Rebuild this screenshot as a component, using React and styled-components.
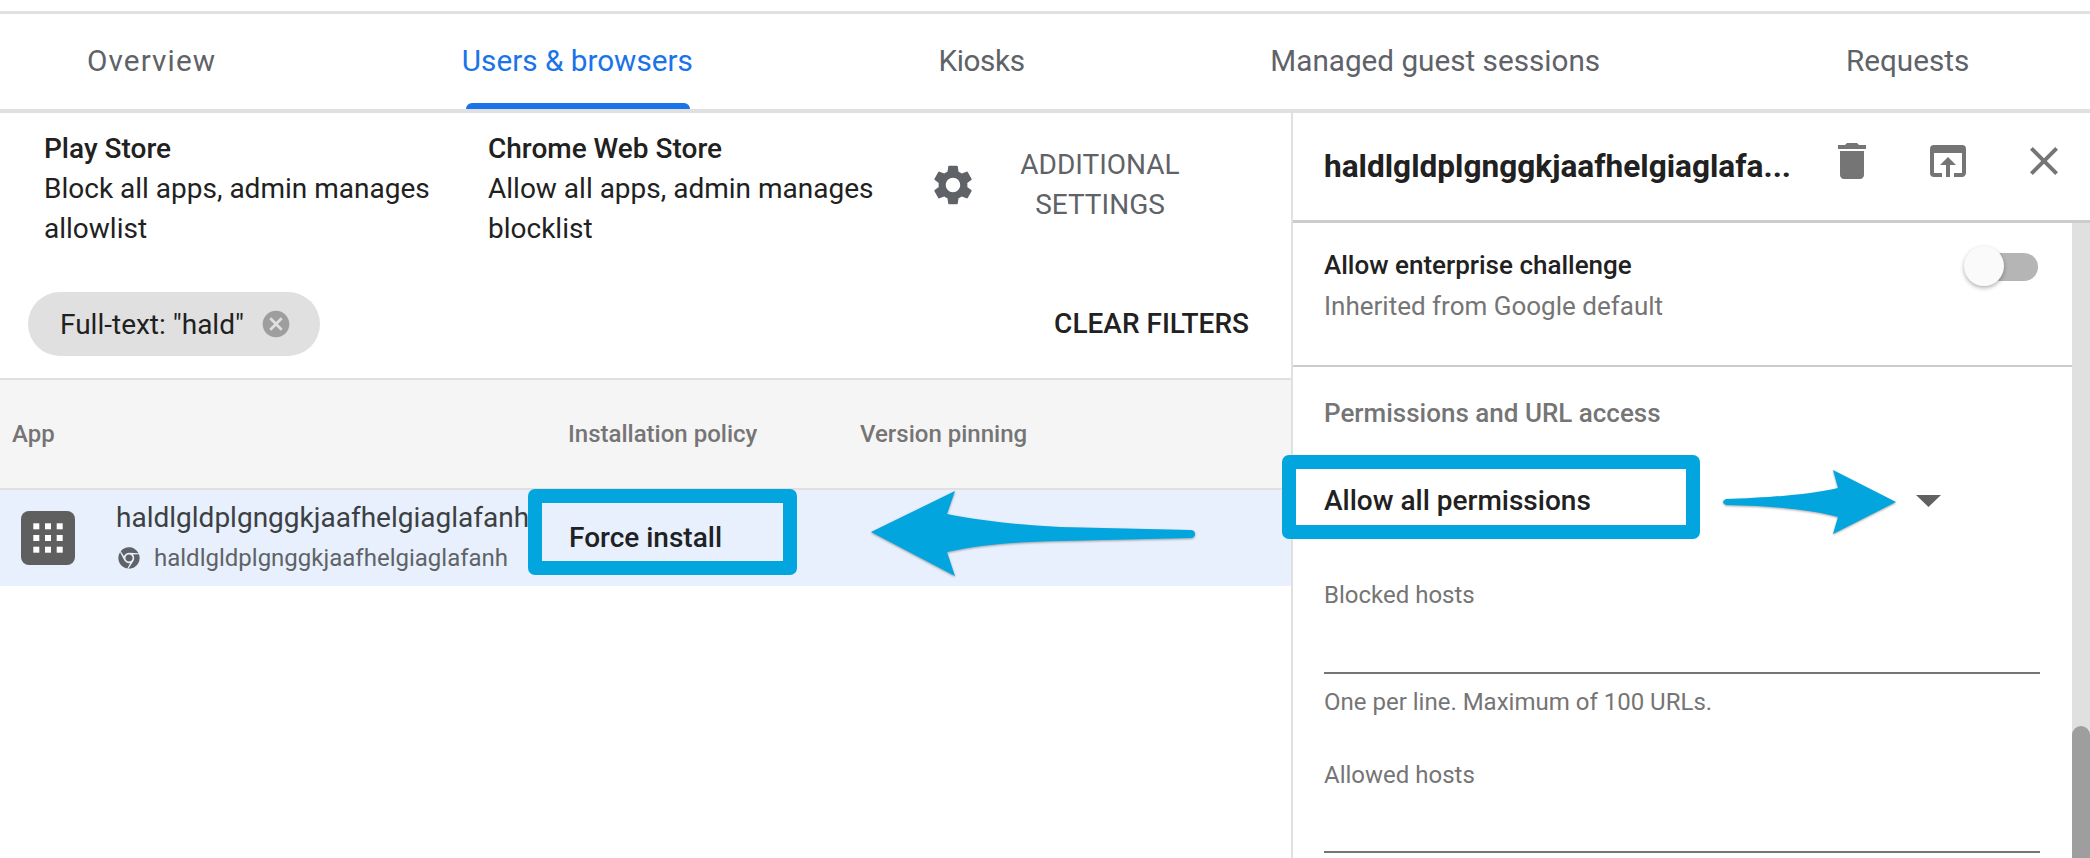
import styled, { createGlobalStyle } from 'styled-components';
import { MdSettings, MdCancel, MdDelete, MdOpenInBrowser, MdClose } from 'react-icons/md';
import { FaChrome } from 'react-icons/fa';

const GlobalStyle = createGlobalStyle`
  html, body { margin: 0; padding: 0; background: #fff; overflow: hidden; }
  body { font-family: Roboto, "Liberation Sans", sans-serif; }
  * { box-sizing: border-box; }
`;

const Page = styled.div`
  position: relative;
  width: 2090px;
  height: 858px;
  overflow: hidden;
  padding-top: 11px;
  display: flex;
  flex-direction: column;
`;

const Tabs = styled.nav`
  flex: none;
  display: flex;
  gap: 245.7px;
  height: 102px;
  padding-left: 87px;
  border-top: 3px solid #e0e0e0;
  border-bottom: 4px solid #e0e0e0;
`;

const Tab = styled.div`
  position: relative;
  font-size: 29.7px;
  line-height: 94px;
  letter-spacing: ${({ $spacing }) => $spacing || 0}px;
  white-space: nowrap;
  color: ${({ $active }) => ($active ? '#1a73e8' : '#5f6368')};

  ${({ $active }) => $active && `
    &::after {
      content: '';
      position: absolute;
      left: 4px;
      right: 3px;
      bottom: 0;
      height: 6px;
      background: #1a73e8;
      border-radius: 6px 6px 0 0;
    }
  `}
`;

const Main = styled.div`
  flex: 1;
  min-height: 0;
  display: flex;
`;

const LeftColumn = styled.section`
  flex: none;
  width: 1291px;
  display: flex;
  flex-direction: column;
`;

const StoreRow = styled.div`
  display: grid;
  grid-template-columns: 444px 441px auto;
  height: 135px;
  padding: 16px 0 0 44px;
`;

const Store = styled.div`
  padding-right: 40px;
  font-size: 28px;
  line-height: 40px;
  color: #212121;
`;

const StoreName = styled.div`
  font-weight: 500;
`;

const SettingsButton = styled.div`
  display: flex;
  align-items: center;
  gap: 33px;
  height: 80px;
  margin-top: 16px;
  color: #5f6368;
  font-size: 28px;
  line-height: 40px;
  text-align: center;
`;

const SettingsLabel = styled.div`
  width: 180px;
`;

const FilterRow = styled.div`
  display: flex;
  align-items: center;
  justify-content: space-between;
  padding: 44px 42px 22px 28px;
`;

const Chip = styled.div`
  display: flex;
  align-items: center;
  gap: 16px;
  height: 64px;
  padding: 0 28px 0 32px;
  border-radius: 32px;
  background: #e0e0e0;
  font-size: 28px;
  color: #212121;

  svg { color: #9e9e9e; }
`;

const ClearButton = styled.div`
  margin-bottom: 2px;
  font-size: 28px;
  font-weight: 500;
  color: #212121;
`;

const TableHead = styled.div`
  display: grid;
  grid-template-columns: 568px 292px 1fr;
  align-items: center;
  height: 110px;
  border-top: 2px solid #e0e0e0;
  background: #f5f5f5;
  font-size: 24px;
  font-weight: 500;
  color: #757575;
`;

const AppHeading = styled.div`
  padding-left: 12px;
`;

const TableRow = styled.div`
  display: grid;
  grid-template-columns: 569px 1fr;
  align-items: center;
  height: 98px;
  border-top: 2px solid #e0e0e0;
  background: #e7f0fc;
`;

const AppCell = styled.div`
  display: flex;
  align-items: center;
  gap: 41px;
  padding-left: 21px;
`;

const AppIcon = styled.svg`
  flex: none;
  width: 54px;
  height: 54px;
`;

const AppTitle = styled.div`
  font-size: 28px;
  line-height: 40px;
  color: #3c4043;
  white-space: nowrap;
`;

const AppSource = styled.div`
  display: flex;
  align-items: center;
  gap: 14px;
  padding-left: 2px;
  font-size: 24px;
  line-height: 40px;
  color: #5f6368;
  white-space: nowrap;
`;

const PolicyCell = styled.div`
  margin-bottom: 2px;
  font-size: 28px;
  font-weight: 500;
  color: #202124;
`;

const Panel = styled.aside`
  flex: 1;
  min-width: 0;
  display: flex;
  flex-direction: column;
  border-left: 2px solid #e0e0e0;
`;

const PanelHeader = styled.header`
  flex: none;
  display: flex;
  align-items: center;
  height: 110px;
  padding: 0 22px 0 31px;
  border-bottom: 3px solid #ccc;
`;

const PanelTitle = styled.div`
  font-size: 31.6px;
  font-weight: 700;
  color: #212121;
  white-space: nowrap;
`;

const PanelActions = styled.div`
  display: flex;
  gap: 48px;
  margin-left: auto;
  padding-bottom: 11px;
  color: #757575;
`;

const PanelBody = styled.div`
  flex: 1;
  min-height: 0;
  display: flex;
`;

const PanelContent = styled.div`
  flex: 1;
  min-width: 0;
`;

const ScrollTrack = styled.div`
  flex: none;
  width: 18px;
  display: flex;
  flex-direction: column;
  justify-content: flex-end;
  background: #e0e0e0;
`;

const ScrollThumb = styled.div`
  height: 132px;
  border-radius: 9px 9px 0 0;
  background: #9e9e9e;
`;

const ToggleSection = styled.div`
  display: flex;
  justify-content: space-between;
  align-items: flex-start;
  height: 144px;
  padding: 22px 34px 0 31px;
  border-bottom: 2px solid #ccc;
`;

const ToggleLabel = styled.div`
  font-size: 26px;
  font-weight: 500;
  line-height: 40px;
  color: #212121;
`;

const ToggleHint = styled.div`
  margin-top: 1px;
  font-size: 26px;
  line-height: 40px;
  color: #757575;
`;

const Toggle = styled.div`
  position: relative;
  width: 74px;
  height: 40px;
  margin-top: 1px;
  border-radius: 20px;

  &::before {
    content: '';
    position: absolute;
    left: 2px;
    right: 0;
    top: 7px;
    height: 28px;
    border-radius: 14px;
    background: #b5b5b5;
  }

  &::after {
    content: '';
    position: absolute;
    left: 0;
    top: 0;
    width: 40px;
    height: 40px;
    border-radius: 50%;
    background: #fafafa;
    box-shadow: 0 2px 4px rgba(0, 0, 0, 0.3);
  }
`;

const AccessSection = styled.div`
  padding: 26px 32px 0 31px;
`;

const SectionTitle = styled.div`
  font-size: 26px;
  font-weight: 500;
  line-height: 40px;
  color: #757575;
`;

const SelectRow = styled.div`
  display: flex;
  align-items: center;
  justify-content: space-between;
  height: 40px;
  margin-top: 47px;
  padding-right: 99px;
  font-size: 28px;
  font-weight: 500;
  color: #212121;
`;

const Caret = styled.svg`
  width: 25px;
  height: 12px;
  margin-top: 2px;
  fill: #616161;
`;

const FieldLabel = styled.div`
  margin-top: ${({ $gap }) => $gap}px;
  font-size: 24px;
  line-height: 36px;
  color: #757575;
`;

const FieldInput = styled.div`
  height: ${({ $height }) => $height}px;
  border-bottom: 2px solid #757575;
`;

const FieldHelp = styled.div`
  margin-top: 10px;
  font-size: 24px;
  line-height: 36px;
  color: #757575;
`;

const Callout = styled.div`
  position: absolute;
  border: 14px solid #02a5dd;
  border-radius: 7px;
  pointer-events: none;
`;

const PolicyCallout = styled(Callout)`
  left: 528px;
  top: 489px;
  width: 269px;
  height: 86px;
`;

const PermissionCallout = styled(Callout)`
  left: 1282px;
  top: 455px;
  width: 418px;
  height: 84px;
`;

const Arrow = styled.svg`
  position: absolute;
  fill: #02a5dd;
  filter: drop-shadow(0 1px 1px rgba(0, 0, 0, 0.35));
  pointer-events: none;
`;

const PolicyArrow = styled(Arrow)`
  left: 871px;
  top: 491px;
  width: 326px;
  height: 86px;
`;

const PermissionArrow = styled(Arrow)`
  left: 1722px;
  top: 470px;
  width: 176px;
  height: 66px;
`;

const gridDots = [12.3, 24, 35.7];

export default function App() {
  return (
    <>
      <GlobalStyle />
      <Page>
        <Tabs>
          <Tab $spacing={1.1}>Overview</Tab>
          <Tab $active>Users &amp; browsers</Tab>
          <Tab $spacing={-0.4}>Kiosks</Tab>
          <Tab>Managed guest sessions</Tab>
          <Tab>Requests</Tab>
        </Tabs>
        <Main>
          <LeftColumn>
            <StoreRow>
              <Store>
                <StoreName>Play Store</StoreName>
                Block all apps, admin manages allowlist
              </Store>
              <Store>
                <StoreName>Chrome Web Store</StoreName>
                Allow all apps, admin manages blocklist
              </Store>
              <SettingsButton>
                <MdSettings size={48} />
                <SettingsLabel>ADDITIONAL SETTINGS</SettingsLabel>
              </SettingsButton>
            </StoreRow>
            <FilterRow>
              <Chip>
                Full-text: "hald"
                <MdCancel size={32} />
              </Chip>
              <ClearButton>CLEAR FILTERS</ClearButton>
            </FilterRow>
            <TableHead>
              <AppHeading>App</AppHeading>
              <div>Installation policy</div>
              <div>Version pinning</div>
            </TableHead>
            <TableRow>
              <AppCell>
                <AppIcon viewBox="0 0 54 54">
                  <rect width="54" height="54" rx="8" fill="#5f5f5f" />
                  {gridDots.map((y) =>
                    gridDots.map((x) => (
                      <rect key={`${x}-${y}`} x={x} y={y} width="6" height="6" fill="#fff" />
                    ))
                  )}
                </AppIcon>
                <div>
                  <AppTitle>haldlgldplgnggkjaafhelgiaglafanh</AppTitle>
                  <AppSource>
                    <FaChrome size={22} />
                    haldlgldplgnggkjaafhelgiaglafanh
                  </AppSource>
                </div>
              </AppCell>
              <PolicyCell>Force install</PolicyCell>
            </TableRow>
          </LeftColumn>
          <Panel>
            <PanelHeader>
              <PanelTitle>haldlgldplgnggkjaafhelgiaglafa...</PanelTitle>
              <PanelActions>
                <MdDelete size={48} />
                <MdOpenInBrowser size={48} />
                <MdClose size={48} />
              </PanelActions>
            </PanelHeader>
            <PanelBody>
              <PanelContent>
                <ToggleSection>
                  <div>
                    <ToggleLabel>Allow enterprise challenge</ToggleLabel>
                    <ToggleHint>Inherited from Google default</ToggleHint>
                  </div>
                  <Toggle />
                </ToggleSection>
                <AccessSection>
                  <SectionTitle>Permissions and URL access</SectionTitle>
                  <SelectRow>
                    Allow all permissions
                    <Caret viewBox="0 0 25 12">
                      <polygon points="0,0 25,0 12.5,12" />
                    </Caret>
                  </SelectRow>
                  <FieldLabel $gap={57}>Blocked hosts</FieldLabel>
                  <FieldInput $height={61} />
                  <FieldHelp>One per line. Maximum of 100 URLs.</FieldHelp>
                  <FieldLabel $gap={37}>Allowed hosts</FieldLabel>
                  <FieldInput $height={60} />
                </AccessSection>
              </PanelContent>
              <ScrollTrack>
                <ScrollThumb />
              </ScrollTrack>
            </PanelBody>
          </Panel>
        </Main>
        <PolicyCallout />
        <PermissionCallout />
        <PolicyArrow viewBox="0 0 326 86">
          <path d="M0 41 L84 0 L76 23 C110 30 150 34 189 36 L319 39 Q324 39 324 43 Q324 47 319 47 L189 50 C150 51 110 53 76 61 L84 85 Z" />
        </PolicyArrow>
        <PermissionArrow viewBox="0 0 176 66">
          <path d="M4 29 C40 28 88 25 116 18 L111 0 L174 32 L111 64 L116 47 C100 42 60 36 4 35 Q-2 32 4 29 Z" />
        </PermissionArrow>
      </Page>
    </>
  );
}
